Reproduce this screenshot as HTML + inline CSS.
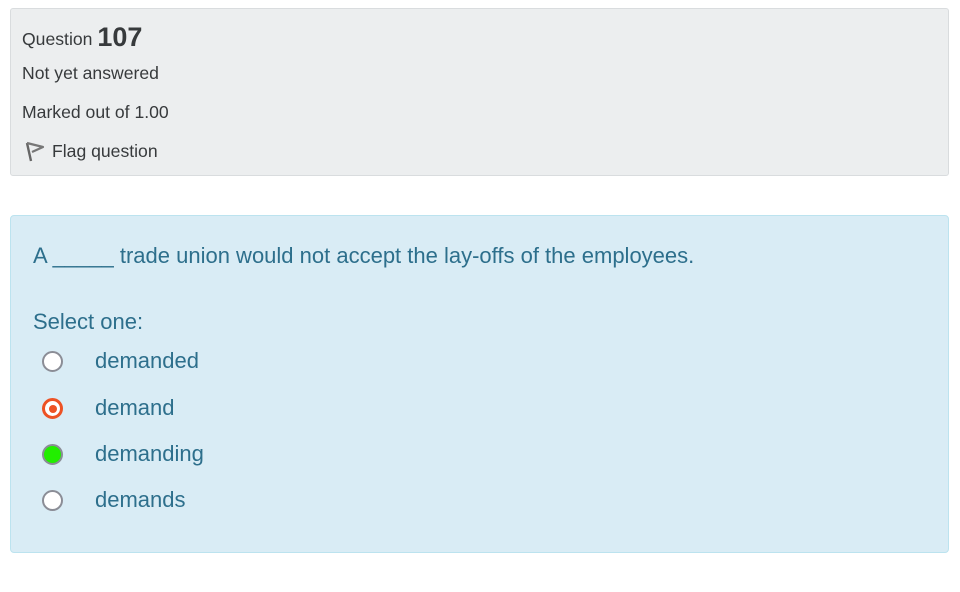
<!DOCTYPE html>
<html><head><style>
body{margin:0;background:#fff;font-family:"Liberation Sans",Arial,sans-serif;width:960px;height:592px;position:relative}
.info{position:absolute;left:10px;top:8px;width:937px;height:166px;background:#eceeef;border:1px solid #d9dcde;border-radius:3px;color:#373a3c}
.t{position:absolute;left:11px;font-size:17.6px;white-space:nowrap}
.q{position:absolute;left:10px;top:215px;width:937px;height:336px;background:#d9ecf5;border:1px solid #bce3ef;border-radius:4px;color:#2d6f8c}
.r{position:absolute;left:31px;width:21px;height:21px;border-radius:50%;box-sizing:border-box;background:#fff;border:2.5px solid #8b8d96}
.l{position:absolute;left:84px;font-size:22px;white-space:nowrap}
</style></head><body>
<div class="info">
<div class="t" style="top:12px">Question <b style="font-size:27px;position:relative;top:1px">107</b></div>
<div class="t" style="top:54px">Not yet answered</div>
<div class="t" style="top:93px">Marked out of 1.00</div>
<svg style="position:absolute;left:13px;top:131px" width="22" height="24" viewBox="0 0 22 24"><path d="M3 3 L7 21" stroke="#666" stroke-width="2.4" fill="none"/><path d="M3 3 L19 7 L8 12" stroke="#777" stroke-width="2.2" fill="none" stroke-linejoin="round"/></svg>
<div class="t" style="top:132px;left:41px">Flag question</div>
</div>
<div class="q">
<div style="position:absolute;left:22px;top:27px;font-size:22px;white-space:nowrap">A _____ trade union would not accept the lay-offs of the employees.</div>
<div style="position:absolute;left:22px;top:93px;font-size:22px">Select one:</div>
<div class="r" style="top:135px"></div><div class="l" style="top:132px">demanded</div>
<div class="r" style="top:182px;border:3px solid #ed5224"><div style="position:absolute;left:3.5px;top:3.5px;width:8px;height:8px;border-radius:50%;background:#ed5224"></div></div><div class="l" style="top:179px">demand</div>
<div class="r" style="top:228px;background:#22ee00"></div><div class="l" style="top:225px">demanding</div>
<div class="r" style="top:274px"></div><div class="l" style="top:271px">demands</div>
</div>
</body></html>
